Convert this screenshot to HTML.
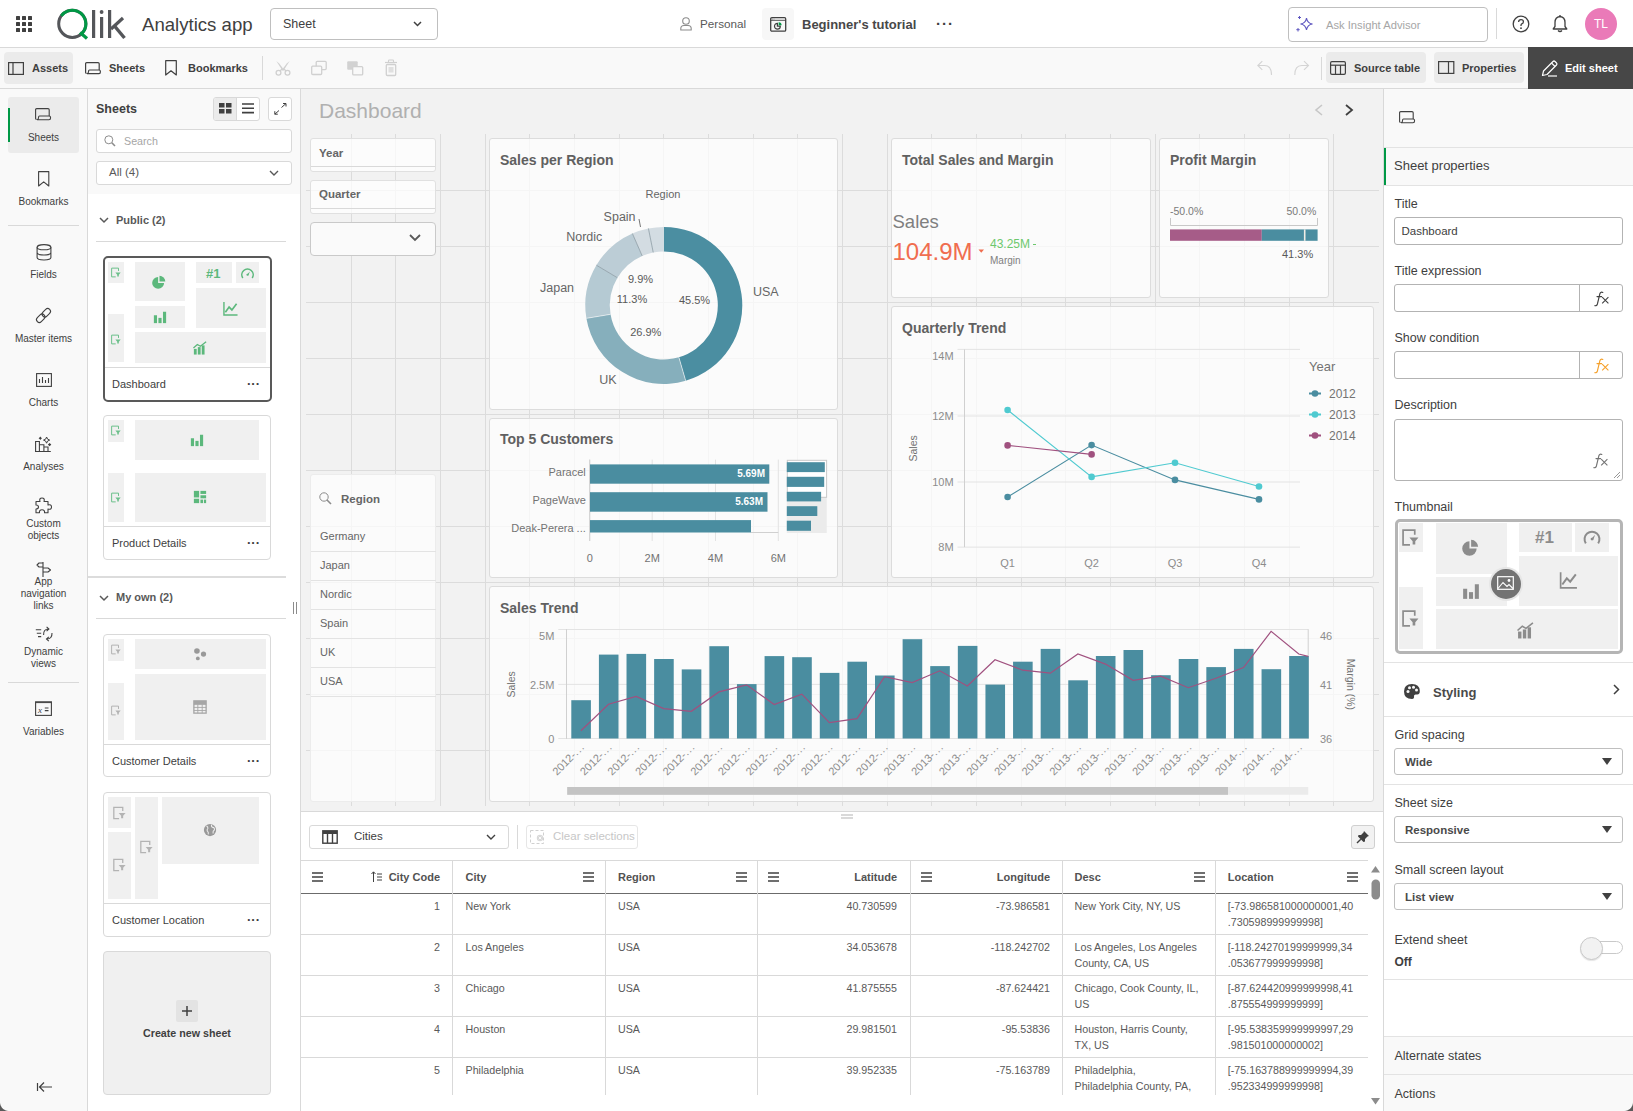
<!DOCTYPE html>
<html><head><meta charset="utf-8">
<style>
*{box-sizing:border-box;margin:0;padding:0}
html,body{width:1633px;height:1111px;overflow:hidden;background:#fff;font-family:"Liberation Sans",sans-serif;color:#404040}
.a{position:absolute}
.t{position:absolute;white-space:nowrap;line-height:1}
svg{position:absolute;overflow:visible}
.ri{position:absolute;left:0;width:87px;text-align:center;font-size:10px;color:#404040;line-height:12px}
.tile{position:absolute;background:#f0f0f0}
.card{position:absolute;background:#fff;border:1px solid #d9d9d9;border-radius:4px}
.cap{position:absolute;font-size:11px;color:#404040;white-space:nowrap;line-height:1}
.dots{position:absolute;font-size:13px;font-weight:700;color:#404040;letter-spacing:0px;line-height:1}
.lbl{position:absolute;font-size:13px;color:#404040;white-space:nowrap;line-height:1}
.inp{position:absolute;background:#fff;border:1px solid #b3b3b3;border-radius:3px}
.ctitle{position:absolute;font-size:14px;font-weight:700;color:#606060;white-space:nowrap;line-height:1}
.chart{position:absolute;background:rgba(255,255,255,0.7);border:1px solid #dcdcdc;border-radius:3px}
.ax{font-family:"Liberation Sans",sans-serif;font-size:11px;fill:#8c8c8c}
.th{position:absolute;font-size:11px;font-weight:700;color:#525252;white-space:nowrap;line-height:1}
.td{position:absolute;font-size:10.7px;color:#595959;white-space:nowrap;line-height:16px}
</style></head><body>
<!-- ============ HEADER ============ -->
<div class="a" style="left:0;top:0;width:1633px;height:48px;background:#fff;border-bottom:1px solid #d9d9d9"></div>
<svg style="left:16px;top:16px" width="16" height="16"><g fill="#404040"><rect x="0" y="0" width="4" height="4" rx=".5"/><rect x="6" y="0" width="4" height="4" rx=".5"/><rect x="12" y="0" width="4" height="4" rx=".5"/><rect x="0" y="6" width="4" height="4" rx=".5"/><rect x="6" y="6" width="4" height="4" rx=".5"/><rect x="12" y="6" width="4" height="4" rx=".5"/><rect x="0" y="12" width="4" height="4" rx=".5"/><rect x="6" y="12" width="4" height="4" rx=".5"/><rect x="12" y="12" width="4" height="4" rx=".5"/></g></svg>
<!-- Qlik logo -->
<svg style="left:56px;top:8px" width="70" height="32">
 <circle cx="16.3" cy="15.8" r="13.6" fill="none" stroke="#54565a" stroke-width="3"/>
 <path d="M5.3,7.8 A13.6,13.6 0 0 1 29.9,15.8 A13.6,13.6 0 0 1 25.5,25.8" fill="none" stroke="#009845" stroke-width="3"/>
 <path d="M24,24.5 L31,30.5" stroke="#009845" stroke-width="3.2" fill="none"/>
 <rect x="36" y="2" width="3.2" height="28" fill="#54565a"/>
 <rect x="44" y="9" width="3.2" height="21" fill="#54565a"/>
 <circle cx="45.6" cy="4" r="1.9" fill="#54565a"/>
 <rect x="52" y="2" width="3.2" height="28" fill="#54565a"/>
 <path d="M55,21 L67,10" stroke="#54565a" stroke-width="3.2" fill="none"/>
 <path d="M58.5,18 L68.5,30" stroke="#54565a" stroke-width="3.4" fill="none"/>
</svg>
<div class="t" style="left:142px;top:15.7px;font-size:18.6px;color:#404040">Analytics app</div>
<div class="a" style="left:270px;top:8px;width:168px;height:32px;border:1px solid #bfbfbf;border-radius:4px;background:#fff"></div>
<div class="t" style="left:283px;top:18px;font-size:12.5px;color:#404040">Sheet</div>
<svg style="left:413px;top:21px" width="9" height="6"><path d="M1,1 L4.5,4.5 L8,1" fill="none" stroke="#404040" stroke-width="1.5"/></svg>
<!-- person -->
<svg style="left:680px;top:17px" width="12" height="14"><circle cx="6" cy="4" r="3.3" fill="none" stroke="#8c8c8c" stroke-width="1.1"/><path d="M0.8,13 L0.8,11.5 Q0.8,8.5 4,8.5 L8,8.5 Q11.2,8.5 11.2,11.5 L11.2,13 Z" fill="none" stroke="#8c8c8c" stroke-width="1.1"/></svg>
<div class="t" style="left:700px;top:18px;font-size:11.7px;color:#595959">Personal</div>
<div class="a" style="left:762px;top:8px;width:32px;height:32px;background:#f7f7f7;border-radius:4px"></div>
<svg style="left:770px;top:17px" width="17" height="15"><rect x="0.7" y="0.7" width="15" height="13.5" rx="1.2" fill="none" stroke="#404040" stroke-width="1.3"/><line x1="0.7" y1="3.3" x2="15.7" y2="3.3" stroke="#404040" stroke-width="0.9"/><circle cx="2.6" cy="2" r=".4" fill="#404040"/><circle cx="4" cy="2" r=".4" fill="#404040"/><path d="M10.3,9.2 A2.9,2.9 0 1 1 7.4,6.3 L7.4,9.2 Z" fill="none" stroke="#404040" stroke-width="1.2"/><path d="M8.6,5.2 A3,3 0 0 1 11.6,8.2 L8.6,8.2 Z" fill="#009845"/></svg>
<div class="t" style="left:802px;top:17.5px;font-size:13px;font-weight:700;color:#484848">Beginner's tutorial</div>
<div class="t" style="left:936px;top:16px;font-size:15px;font-weight:700;color:#404040;letter-spacing:1px">···</div>
<!-- insight advisor -->
<div class="a" style="left:1288px;top:7px;width:200px;height:35px;border:1px solid #bfbfbf;border-radius:4px;background:#fff"></div>
<svg style="left:1296px;top:15px" width="18" height="17"><path d="M10.5,3 Q11.3,8.2 16.5,9 Q11.3,9.8 10.5,15 Q9.7,9.8 4.5,9 Q9.7,8.2 10.5,3 Z" fill="none" stroke="#5e56c0" stroke-width="1.1"/><path d="M3.5,1 L3.5,4 M2,2.5 L5,2.5" stroke="#5e56c0" stroke-width="1"/><path d="M2,13 L2,16.5 M0.3,14.7 L3.7,14.7" stroke="#5e56c0" stroke-width="1"/></svg>
<div class="t" style="left:1326px;top:19.5px;font-size:11.2px;color:#a6a6a6">Ask Insight Advisor</div>
<div class="a" style="left:1496px;top:8px;width:1px;height:31px;background:#d9d9d9"></div>
<svg style="left:1512px;top:15px" width="18" height="18"><circle cx="9" cy="9" r="7.8" fill="none" stroke="#404040" stroke-width="1.3"/><path d="M6.6,7 Q6.6,4.7 9,4.7 Q11.4,4.7 11.4,6.8 Q11.4,8.3 9.8,8.9 Q9,9.3 9,10.5 L9,11" fill="none" stroke="#404040" stroke-width="1.3"/><circle cx="9" cy="13.2" r=".9" fill="#404040"/></svg>
<svg style="left:1552px;top:15px" width="16" height="18"><path d="M8,1.5 Q3,2 3,7.5 L3,11.5 L1.2,14 L14.8,14 L13,11.5 L13,7.5 Q13,2 8,1.5 Z" fill="none" stroke="#404040" stroke-width="1.3" stroke-linejoin="round"/><path d="M6,15.5 Q8,17.5 10,15.5" fill="none" stroke="#404040" stroke-width="1.3"/><line x1="8" y1="0" x2="8" y2="1.6" stroke="#404040" stroke-width="1.3"/></svg>
<div class="a" style="left:1585px;top:8px;width:32px;height:32px;border-radius:50%;background:#ea7ab8"></div>
<div class="t" style="left:1585px;top:18px;width:32px;text-align:center;font-size:12px;color:#fff">TL</div>

<!-- ============ TOOLBAR ============ -->
<div class="a" style="left:0;top:48px;width:1633px;height:41px;background:#f9f9f9;border-bottom:1px solid #d9d9d9"></div>
<div class="a" style="left:4px;top:52px;width:69px;height:32px;background:#ebebeb;border-radius:4px"></div>
<svg style="left:8px;top:62px" width="16" height="13"><rect x=".6" y=".6" width="14.8" height="11.8" fill="none" stroke="#404040" stroke-width="1.2"/><line x1="5" y1=".6" x2="5" y2="12.4" stroke="#404040" stroke-width="1.2"/></svg>
<div class="t" style="left:32px;top:63px;font-size:11px;font-weight:700;color:#404040">Assets</div>
<svg style="left:85px;top:62px" width="16" height="13"><path d="M1.7,11.5 Q.6,11.5 .6,10.3 L.6,1.8 Q.6,.6 1.7,.6 L13,.6 Q14.2,.6 14.2,1.8 L14.2,8" fill="none" stroke="#404040" stroke-width="1.2"/><path d="M4.5,8 L14,8 Q15.4,8 15.4,9.7 Q15.4,11.6 14,11.6 L2,11.6 Q3.5,11.6 3.5,9.8 Q3.5,8 4.5,8 Z" fill="none" stroke="#404040" stroke-width="1.2"/></svg>
<div class="t" style="left:109px;top:63px;font-size:11px;font-weight:700;color:#404040">Sheets</div>
<svg style="left:165px;top:60px" width="12" height="16"><path d="M.7,.7 L11.3,.7 L11.3,15 L6,10.8 L.7,15 Z" fill="none" stroke="#404040" stroke-width="1.2" stroke-linejoin="round"/></svg>
<div class="t" style="left:188px;top:63px;font-size:11px;font-weight:700;color:#404040">Bookmarks</div>
<div class="a" style="left:262px;top:56px;width:1px;height:24px;background:#d9d9d9"></div>
<svg style="left:274px;top:59px" width="18" height="18"><path d="M2.3,2 L5.2,4.5 L10,10.8 L8.6,11.8 Z" fill="#d0d0d0"/><path d="M15.7,2 L12.8,4.5 L8,10.8 L9.4,11.8 Z" fill="#d0d0d0"/><circle cx="4.5" cy="13.8" r="2.4" fill="none" stroke="#d0d0d0" stroke-width="1.3"/><circle cx="13.5" cy="13.8" r="2.4" fill="none" stroke="#d0d0d0" stroke-width="1.3"/><path d="M6,12 L8,10 M12,12 L10,10" stroke="#d0d0d0" stroke-width="1.3"/></svg>
<svg style="left:310px;top:60px" width="18" height="16"><rect x="6.2" y="1.3" width="10" height="8.3" rx="1" fill="#f9f9f9" stroke="#d0d0d0" stroke-width="1.3"/><rect x="1.7" y="6.2" width="10" height="8.3" rx="1" fill="#f9f9f9" stroke="#d0d0d0" stroke-width="1.3"/></svg>
<svg style="left:346px;top:60px" width="18" height="16"><rect x="1.2" y="1.2" width="10.5" height="8.6" rx="1" fill="#d2d2d2"/><rect x="6.7" y="6.6" width="10" height="8.3" rx="1" fill="#f9f9f9" stroke="#d0d0d0" stroke-width="1.3"/></svg>
<svg style="left:384px;top:59px" width="14" height="18"><path d="M1,3.5 L13,3.5" stroke="#d0d0d0" stroke-width="1.2"/><path d="M4.5,3.5 L4.5,1.8 Q4.5,1 5.3,1 L8.7,1 Q9.5,1 9.5,1.8 L9.5,3.5" fill="none" stroke="#d0d0d0" stroke-width="1.1"/><rect x="2.3" y="5.5" width="9.4" height="11" rx="1" fill="none" stroke="#d0d0d0" stroke-width="1.3"/><rect x="4.5" y="8" width="5" height="5.5" fill="#e0e0e0"/></svg>
<!-- right toolbar -->
<svg style="left:1256px;top:60px" width="18" height="16"><path d="M6.3,1.2 L1.8,5.5 L6.3,9.8 M1.8,5.5 L8.5,5.5 Q15.5,5.5 15.5,15" fill="none" stroke="#d4d4d4" stroke-width="1.1"/></svg>
<svg style="left:1292px;top:60px" width="18" height="16"><path d="M12,1.2 L16.5,5.5 L12,9.8 M16.5,5.5 L9.8,5.5 Q2.8,5.5 2.8,15" fill="none" stroke="#d4d4d4" stroke-width="1.1"/></svg>
<div class="a" style="left:1321px;top:57px;width:1px;height:23px;background:#d9d9d9"></div>
<div class="a" style="left:1326px;top:52px;width:100px;height:31px;background:#ebebeb;border-radius:4px"></div>
<svg style="left:1330px;top:61px" width="16" height="14"><rect x=".6" y=".6" width="14.8" height="12.8" rx="1.3" fill="none" stroke="#404040" stroke-width="1.2"/><line x1=".6" y1="4.2" x2="15.4" y2="4.2" stroke="#404040" stroke-width="1.2"/><line x1="5.5" y1="4.2" x2="5.5" y2="13.4" stroke="#404040" stroke-width="1.2"/><line x1="10.5" y1="4.2" x2="10.5" y2="13.4" stroke="#404040" stroke-width="1.2"/></svg>
<div class="t" style="left:1354px;top:63px;font-size:11px;font-weight:700;color:#404040">Source table</div>
<div class="a" style="left:1434px;top:52px;width:90px;height:31px;background:#ebebeb;border-radius:4px"></div>
<svg style="left:1438px;top:61px" width="17" height="13"><rect x=".6" y=".6" width="15.2" height="11.8" fill="none" stroke="#404040" stroke-width="1.2"/><line x1="10.5" y1=".6" x2="10.5" y2="12.4" stroke="#404040" stroke-width="1.2"/></svg>
<div class="t" style="left:1462px;top:63px;font-size:11px;font-weight:700;color:#404040">Properties</div>
<div class="a" style="left:1528px;top:47px;width:105px;height:42px;background:#474747"></div>
<svg style="left:1541px;top:59px" width="17" height="18"><path d="M1.5,16.5 L2.5,12 L12,2.5 Q13,1.5 14,2.5 L15.5,4 Q16.5,5 15.5,6 L6,15.5 Z" fill="none" stroke="#fff" stroke-width="1.2" stroke-linejoin="round"/><line x1="10.5" y1="4" x2="14" y2="7.5" stroke="#fff" stroke-width="1.1"/><line x1="7" y1="17" x2="16" y2="17" stroke="#fff" stroke-width="1.2"/></svg>
<div class="t" style="left:1565px;top:63px;font-size:11px;font-weight:700;color:#fff">Edit sheet</div>
<svg width="0" height="0" style="position:absolute;left:0;top:0">
<defs>
<symbol id="i-filter" viewBox="0 0 16 16"><path d="M12,5.5 L12,1 L1,1 L1,15 L7.5,15" fill="none" stroke="currentColor" stroke-width="1.6"/><path d="M7,8 L15.5,8 L12.5,11.5 L12.5,14.5 L10,14.5 L10,11.5 Z" fill="currentColor"/></symbol>
<symbol id="i-pie" viewBox="0 0 16 16"><path d="M7,2.2 A6.8,6.8 0 1 0 13.8,9 L7,9 Z" fill="currentColor"/><path d="M8.6,0.8 A6.8,6.8 0 0 1 15.2,7.4 L8.6,7.4 Z" fill="currentColor"/></symbol>
<symbol id="i-bar" viewBox="0 0 16 16"><rect x="1" y="6" width="3.6" height="9" fill="currentColor"/><rect x="6.2" y="9" width="3.6" height="6" fill="currentColor"/><rect x="11.4" y="2" width="3.6" height="13" fill="currentColor"/></symbol>
<symbol id="i-line" viewBox="0 0 16 16"><path d="M1,1 L1,15 L15.5,15" fill="none" stroke="currentColor" stroke-width="1.5"/><path d="M2.5,12 L6.5,6.5 L9.5,9.5 L14.5,3" fill="none" stroke="currentColor" stroke-width="1.8"/></symbol>
<symbol id="i-combo" viewBox="0 0 16 16"><rect x="1" y="9" width="3.2" height="6.5" fill="currentColor"/><rect x="5.5" y="7" width="3.2" height="8.5" fill="currentColor"/><rect x="10" y="5" width="3.2" height="10.5" fill="currentColor"/><path d="M0.5,8 L5,4 L8.5,6 L15,0.8" fill="none" stroke="currentColor" stroke-width="1.5"/></symbol>
<symbol id="i-gauge" viewBox="0 0 16 16"><path d="M2.2,13.5 A7,7 0 1 1 13.8,13.5" fill="none" stroke="currentColor" stroke-width="1.9"/><path d="M7,9.5 L11,5.5 L9,10.5 Z" fill="currentColor"/><circle cx="8" cy="9.5" r="1.3" fill="currentColor"/></symbol>
<symbol id="i-tree" viewBox="0 0 16 16"><rect x="1" y="1" width="6" height="7.5" fill="currentColor"/><rect x="1" y="10" width="6" height="5" fill="currentColor"/><rect x="8.5" y="1" width="6.5" height="3.5" fill="currentColor"/><rect x="8.5" y="6" width="6.5" height="3.5" fill="currentColor"/><rect x="8.5" y="11" width="3" height="4" fill="currentColor"/><rect x="12.5" y="11" width="2.5" height="4" fill="currentColor"/></symbol>
<symbol id="i-scatter" viewBox="0 0 16 16"><circle cx="4.5" cy="4.5" r="3.2" fill="currentColor"/><circle cx="12" cy="8" r="3" fill="currentColor"/><circle cx="5.5" cy="13" r="2.2" fill="currentColor"/></symbol>
<symbol id="i-table" viewBox="0 0 16 16"><rect x="1" y="1" width="14" height="14" fill="none" stroke="currentColor" stroke-width="1.5"/><path d="M1,5 L15,5 M1,8.5 L15,8.5 M1,12 L15,12 M5.5,5 L5.5,15 M10.5,5 L10.5,15" stroke="currentColor" stroke-width="1"/><rect x="1" y="1" width="14" height="4" fill="currentColor"/></symbol>
<symbol id="i-globe" viewBox="0 0 16 16"><circle cx="8" cy="8" r="7" fill="currentColor"/><path d="M4,3.5 Q6,4.5 5.5,6.5 Q4,7.5 5,9.5 Q6.5,10 6,13 M10,2 Q9,4 11,5 Q13.5,5 13,8 Q11,9 11.5,12" fill="none" stroke="#f0f0f0" stroke-width="1.2"/></symbol>
</defs></svg>
<!-- ============ LEFT RAIL ============ -->
<div class="a" style="left:0;top:89px;width:88px;height:1022px;background:#f9f9f9;border-right:1px solid #d9d9d9"></div>
<div class="a" style="left:8px;top:97px;width:71px;height:56px;background:#ebebeb;border-radius:3px"></div>
<div class="a" style="left:8px;top:108px;width:2px;height:34px;background:#009845"></div>
<svg style="left:35px;top:108px" width="17" height="13"><path d="M1.7,11.5 Q.6,11.5 .6,10.3 L.6,1.8 Q.6,.6 1.7,.6 L13,.6 Q14.2,.6 14.2,1.8 L14.2,8" fill="none" stroke="#404040" stroke-width="1.1"/><path d="M4.5,8 L14,8 Q15.6,8 15.6,9.8 Q15.6,11.8 14,11.8 L2,11.8 Q3.5,11.8 3.5,9.8 Q3.5,8 4.5,8 Z" fill="none" stroke="#404040" stroke-width="1.1"/></svg>
<div class="ri" style="top:132px">Sheets</div>
<svg style="left:38px;top:171px" width="12" height="16"><path d="M.6,.6 L10.8,.6 L10.8,15 L5.7,10.8 L.6,15 Z" fill="none" stroke="#404040" stroke-width="1.1" stroke-linejoin="round"/></svg>
<div class="ri" style="top:196px">Bookmarks</div>
<div class="a" style="left:8px;top:225px;width:71px;height:1px;background:#d9d9d9"></div>
<svg style="left:36px;top:244px" width="16" height="17"><ellipse cx="8" cy="3.2" rx="6.9" ry="2.6" fill="none" stroke="#404040" stroke-width="1.1"/><path d="M1.1,3.2 L1.1,13.5 Q1.1,16 8,16 Q14.9,16 14.9,13.5 L14.9,3.2 M1.1,8.5 Q1.1,11 8,11 Q14.9,11 14.9,8.5" fill="none" stroke="#404040" stroke-width="1.1"/></svg>
<div class="ri" style="top:269px">Fields</div>
<svg style="left:36px;top:308px" width="15" height="15"><g transform="rotate(-45 7.5 7.5)" fill="none" stroke="#404040" stroke-width="1.1"><rect x="-1.2" y="4.7" width="9.5" height="5.6" rx="2.8"/><rect x="6.7" y="4.7" width="9.5" height="5.6" rx="2.8"/></g></svg>
<div class="ri" style="top:333px">Master items</div>
<svg style="left:36px;top:373px" width="16" height="14"><rect x=".6" y=".6" width="14.8" height="12.8" fill="none" stroke="#404040" stroke-width="1.1"/><path d="M3.5,10 L3.5,6 M6.5,10 L6.5,4 M9.5,10 L9.5,7 M12.5,10 L12.5,5" stroke="#404040" stroke-width="1.1"/></svg>
<div class="ri" style="top:397px">Charts</div>
<svg style="left:35px;top:436px" width="17" height="17"><path d="M0.6,15.5 L0.6,5.5 L4.4,5.5 L4.4,15.5 M4.4,15.5 L4.4,8.8 L8.9,8.8 L8.9,15.5 M8.9,15.5 L8.9,11 L13,11 L13,15.5 M0,15.5 L15.8,15.5" fill="none" stroke="#404040" stroke-width="1.1"/><path d="M11.6,1 Q12,3.7 14.7,4.1 Q12,4.5 11.6,7.2 Q11.2,4.5 8.5,4.1 Q11.2,3.7 11.6,1 Z" fill="none" stroke="#404040" stroke-width="1"/><path d="M5.3,0.6 L6.1,1.5 L7,2.3 L6.1,3.1 L5.3,4 L4.5,3.1 L3.6,2.3 L4.5,1.5Z" fill="#404040"/><path d="M14.6,6.9 L15.4,7.8 L16.3,8.6 L15.4,9.4 L14.6,10.3 L13.8,9.4 L12.9,8.6 L13.8,7.8Z" fill="#404040"/></svg>
<div class="ri" style="top:461px">Analyses</div>
<svg style="left:35px;top:497px" width="18" height="17"><path d="M1,4.5 L5,4.5 Q4,1 7,1 Q10,1 9,4.5 L13,4.5 L13,8 Q16.5,7 16.5,10 Q16.5,13 13,12 L13,15.8 L9.5,15.8 Q10,12.8 7,12.8 Q4,12.8 4.5,15.8 L1,15.8 L1,12 Q3.5,12 3.5,10 Q3.5,8 1,8 Z" fill="none" stroke="#404040" stroke-width="1.1" stroke-linejoin="round"/></svg>
<div class="ri" style="top:518px">Custom<br>objects</div>
<svg style="left:36px;top:561px" width="16" height="17"><path d="M7,16 L7,1 M7,2 L3,2 L1,4 L3,6 L7,6 M7,7 L12,7 L14.5,9 L12,11 L7,11" fill="none" stroke="#404040" stroke-width="1.1" stroke-linejoin="round"/></svg>
<div class="ri" style="top:576px">App<br>navigation<br>links</div>
<svg style="left:35px;top:626px" width="18" height="16"><path d="M0.8,3.8 L6.2,3.8 M1.8,7.2 L6.2,7.2 M3,10.6 L6.2,10.6" stroke="#404040" stroke-width="1.1"/><path d="M8.6,9 Q8.3,3 13.6,3 M11.6,0.9 L13.9,3 L11.6,5.1 M17,7 Q17.2,13 11.8,13 M13.8,10.9 L11.5,13 L13.8,15.1" fill="none" stroke="#404040" stroke-width="1.1"/></svg>
<div class="ri" style="top:646px">Dynamic<br>views</div>
<div class="a" style="left:8px;top:682px;width:71px;height:1px;background:#d9d9d9"></div>
<svg style="left:35px;top:701px" width="17" height="15"><rect x=".6" y=".8" width="15.8" height="13.6" fill="none" stroke="#404040" stroke-width="1.1"/><line x1=".6" y1="1.6" x2="16.4" y2="1.6" stroke="#404040" stroke-width="1"/><text x="3" y="11.5" font-family="Liberation Serif" font-style="italic" font-size="9" fill="#404040">x</text><path d="M9.8,7 L13.5,7 M9.8,9.6 L13.5,9.6" stroke="#404040" stroke-width="1.1"/></svg>
<div class="ri" style="top:726px">Variables</div>
<svg style="left:36px;top:1081px" width="17" height="12"><path d="M1.5,2 L1.5,10 M16,6 L4,6 M8,1.5 L3.5,6 L8,10.5" fill="none" stroke="#404040" stroke-width="1.2"/></svg>

<!-- ============ SHEETS PANEL ============ -->
<div class="a" style="left:88px;top:89px;width:213px;height:1022px;background:#fff;border-right:1px solid #d9d9d9"></div>
<div class="a" style="left:88px;top:89px;width:212px;height:105px;background:#f9f9f9"></div>
<div class="t" style="left:96px;top:103px;font-size:12.5px;font-weight:700;color:#404040">Sheets</div>
<div class="a" style="left:213px;top:97px;width:47px;height:24px;border:1px solid #d9d9d9;border-radius:3px;background:#fff"></div>
<div class="a" style="left:214px;top:98px;width:23px;height:22px;background:#ebebeb;border-right:1px solid #d9d9d9;border-radius:2px 0 0 2px"></div>
<svg style="left:219px;top:103px" width="13" height="11"><rect x="0" y="0" width="5.5" height="4.5" fill="#404040"/><rect x="7" y="0" width="5.5" height="4.5" fill="#404040"/><rect x="0" y="6" width="5.5" height="4.5" fill="#404040"/><rect x="7" y="6" width="5.5" height="4.5" fill="#404040"/></svg>
<svg style="left:242px;top:103px" width="13" height="11"><path d="M0,1 L12,1 M0,5.3 L12,5.3 M0,9.6 L12,9.6" stroke="#404040" stroke-width="1.6"/></svg>
<div class="a" style="left:268px;top:97px;width:24px;height:24px;border:1px solid #d9d9d9;border-radius:3px;background:#fff"></div>
<svg style="left:274px;top:103px" width="13" height="12"><path d="M7.5,4.5 L12,0.5 M9,0.5 L12,0.5 L12,3.5 M5,7.5 L0.8,11.2 M0.8,8.2 L0.8,11.2 L3.8,11.2" fill="none" stroke="#404040" stroke-width="1"/></svg>
<div class="a" style="left:96px;top:129px;width:196px;height:24px;border:1px solid #d9d9d9;border-radius:3px;background:#fff"></div>
<svg style="left:104px;top:135px" width="12" height="12"><circle cx="4.8" cy="4.8" r="4" fill="none" stroke="#8c8c8c" stroke-width="1"/><path d="M7.8,7.8 L11,11" stroke="#8c8c8c" stroke-width="1.6"/></svg>
<div class="t" style="left:124px;top:136px;font-size:10.7px;color:#a6a6a6">Search</div>
<div class="a" style="left:96px;top:161px;width:196px;height:24px;border:1px solid #d9d9d9;border-radius:3px;background:#fff"></div>
<div class="t" style="left:109px;top:167px;font-size:11.5px;color:#595959">All (4)</div>
<svg style="left:269px;top:170px" width="10" height="6"><path d="M1,1 L5,5 L9,1" fill="none" stroke="#595959" stroke-width="1.4"/></svg>
<svg style="left:99px;top:217px" width="10" height="6"><path d="M1,1 L5,5 L9,1" fill="none" stroke="#595959" stroke-width="1.5"/></svg>
<div class="t" style="left:116px;top:215px;font-size:11px;font-weight:700;color:#595959">Public (2)</div>
<div class="a" style="left:96px;top:241px;width:190px;height:1px;background:#d9d9d9"></div>

<!-- card Dashboard -->
<div class="a" style="left:103px;top:256px;width:169px;height:146px;border:2px solid #595959;border-radius:5px;background:#fff"></div>
<div class="tile" style="left:108px;top:262px;width:16px;height:21px"></div>
<div class="tile" style="left:135px;top:262px;width:50px;height:39px"></div>
<div class="tile" style="left:196px;top:262px;width:36px;height:21px"></div>
<div class="tile" style="left:236px;top:262px;width:23px;height:21px"></div>
<div class="tile" style="left:196px;top:288px;width:70px;height:40px"></div>
<div class="tile" style="left:135px;top:306px;width:50px;height:22px"></div>
<div class="tile" style="left:108px;top:314px;width:16px;height:48px"></div>
<div class="tile" style="left:135px;top:332px;width:131px;height:31px"></div>
<div class="a" style="left:105px;top:367px;width:165px;height:1px;background:#d9d9d9"></div>
<div class="cap" style="left:112px;top:379px">Dashboard</div>
<div class="dots" style="left:247px;top:377px">···</div>
<svg style="left:111px;top:267px;color:#6cc08b" width="10" height="11"><use href="#i-filter"/></svg>
<svg style="left:152px;top:275px;color:#5cb87c" width="14" height="14"><use href="#i-pie"/></svg>
<div class="t" style="left:206px;top:267px;font-size:13px;font-weight:700;color:#5cb87c">#1</div>
<svg style="left:241px;top:267px;color:#5cb87c" width="13" height="13"><use href="#i-gauge"/></svg>
<svg style="left:223px;top:301px;color:#5cb87c" width="15" height="15"><use href="#i-line"/></svg>
<svg style="left:153px;top:310px;color:#5cb87c" width="14" height="14"><use href="#i-bar"/></svg>
<svg style="left:111px;top:334px;color:#6cc08b" width="10" height="11"><use href="#i-filter"/></svg>
<svg style="left:193px;top:341px;color:#5cb87c" width="14" height="14"><use href="#i-combo"/></svg>

<!-- card Product Details -->
<div class="card" style="left:103px;top:415px;width:168px;height:145px"></div>
<div class="tile" style="left:108px;top:420px;width:16px;height:22px"></div>
<div class="tile" style="left:135px;top:420px;width:124px;height:40px"></div>
<div class="tile" style="left:108px;top:473px;width:16px;height:49px"></div>
<div class="tile" style="left:135px;top:473px;width:131px;height:49px"></div>
<div class="a" style="left:104px;top:526px;width:166px;height:1px;background:#d9d9d9"></div>
<svg style="left:111px;top:425px;color:#6cc08b" width="10" height="11"><use href="#i-filter"/></svg>
<svg style="left:190px;top:433px;color:#5cb87c" width="14" height="14"><use href="#i-bar"/></svg>
<svg style="left:111px;top:492px;color:#6cc08b" width="10" height="11"><use href="#i-filter"/></svg>
<svg style="left:193px;top:490px;color:#5cb87c" width="14" height="14"><use href="#i-tree"/></svg>
<div class="cap" style="left:112px;top:538px">Product Details</div>
<div class="dots" style="left:247px;top:536px">···</div>

<div class="a" style="left:88px;top:576px;width:198px;height:2px;background:#dcdcdc"></div>
<svg style="left:99px;top:595px" width="10" height="6"><path d="M1,1 L5,5 L9,1" fill="none" stroke="#595959" stroke-width="1.5"/></svg>
<div class="t" style="left:116px;top:592px;font-size:11px;font-weight:700;color:#595959">My own (2)</div>
<div class="a" style="left:96px;top:618px;width:190px;height:1px;background:#d9d9d9"></div>
<div class="a" style="left:293px;top:602px;width:1px;height:12px;background:#8c8c8c"></div>
<div class="a" style="left:296px;top:602px;width:1px;height:12px;background:#8c8c8c"></div>

<!-- card Customer Details -->
<div class="card" style="left:103px;top:634px;width:168px;height:143px"></div>
<div class="tile" style="left:108px;top:639px;width:16px;height:22px"></div>
<div class="tile" style="left:135px;top:639px;width:131px;height:30px"></div>
<div class="tile" style="left:108px;top:683px;width:16px;height:57px"></div>
<div class="tile" style="left:135px;top:674px;width:131px;height:66px"></div>
<div class="a" style="left:104px;top:744px;width:166px;height:1px;background:#d9d9d9"></div>
<svg style="left:111px;top:644px;color:#b3b3b3" width="10" height="11"><use href="#i-filter"/></svg>
<svg style="left:193px;top:647px;color:#999" width="14" height="14"><use href="#i-scatter"/></svg>
<svg style="left:111px;top:705px;color:#b3b3b3" width="10" height="11"><use href="#i-filter"/></svg>
<svg style="left:193px;top:700px;color:#a6a6a6" width="14" height="14"><use href="#i-table"/></svg>
<div class="cap" style="left:112px;top:756px">Customer Details</div>
<div class="dots" style="left:247px;top:754px">···</div>

<!-- card Customer Location -->
<div class="card" style="left:103px;top:792px;width:168px;height:145px"></div>
<div class="tile" style="left:108px;top:797px;width:23px;height:31px"></div>
<div class="tile" style="left:108px;top:832px;width:23px;height:67px"></div>
<div class="tile" style="left:135px;top:797px;width:23px;height:102px"></div>
<div class="tile" style="left:162px;top:797px;width:97px;height:67px"></div>
<div class="a" style="left:104px;top:903px;width:166px;height:1px;background:#d9d9d9"></div>
<svg style="left:113px;top:806px;color:#b3b3b3" width="13" height="14"><use href="#i-filter"/></svg>
<svg style="left:113px;top:858px;color:#b3b3b3" width="13" height="14"><use href="#i-filter"/></svg>
<svg style="left:140px;top:840px;color:#b3b3b3" width="13" height="14"><use href="#i-filter"/></svg>
<svg style="left:203px;top:823px;color:#999" width="14" height="14"><use href="#i-globe"/></svg>
<div class="cap" style="left:112px;top:915px">Customer Location</div>
<div class="dots" style="left:247px;top:913px">···</div>

<!-- create new sheet -->
<div class="a" style="left:103px;top:951px;width:168px;height:144px;background:#f0f0f0;border:1px solid #d9d9d9;border-radius:4px"></div>
<div class="a" style="left:176px;top:1000px;width:22px;height:22px;background:#e3e3e3;border-radius:2px"></div>
<svg style="left:181px;top:1005px" width="12" height="12"><path d="M6,1 L6,11 M1,6 L11,6" stroke="#404040" stroke-width="1.5"/></svg>
<div class="t" style="left:143px;top:1028px;font-size:10.7px;font-weight:700;color:#404040">Create new sheet</div>
<!-- ============ CANVAS ============ -->
<div class="a" style="left:301px;top:89px;width:1082px;height:723px;background:#f2f2f2;border-bottom:1px solid #d9d9d9"></div>
<svg style="left:0;top:0" width="1633" height="1111"><g stroke="#dcdcdc" stroke-width="1"><line x1="351.5" y1="134" x2="351.5" y2="806"/><line x1="395.5" y1="134" x2="395.5" y2="806"/><line x1="440.5" y1="134" x2="440.5" y2="806"/><line x1="485.5" y1="134" x2="485.5" y2="806"/><line x1="529.5" y1="134" x2="529.5" y2="806"/><line x1="574.5" y1="134" x2="574.5" y2="806"/><line x1="619.5" y1="134" x2="619.5" y2="806"/><line x1="663.5" y1="134" x2="663.5" y2="806"/><line x1="708.5" y1="134" x2="708.5" y2="806"/><line x1="753.5" y1="134" x2="753.5" y2="806"/><line x1="797.5" y1="134" x2="797.5" y2="806"/><line x1="842.5" y1="134" x2="842.5" y2="806"/><line x1="887.5" y1="134" x2="887.5" y2="806"/><line x1="931.5" y1="134" x2="931.5" y2="806"/><line x1="976.5" y1="134" x2="976.5" y2="806"/><line x1="1021.5" y1="134" x2="1021.5" y2="806"/><line x1="1065.5" y1="134" x2="1065.5" y2="806"/><line x1="1110.5" y1="134" x2="1110.5" y2="806"/><line x1="1155.5" y1="134" x2="1155.5" y2="806"/><line x1="1199.5" y1="134" x2="1199.5" y2="806"/><line x1="1244.5" y1="134" x2="1244.5" y2="806"/><line x1="1289.5" y1="134" x2="1289.5" y2="806"/><line x1="1333.5" y1="134" x2="1333.5" y2="806"/><line x1="306" y1="190.5" x2="1379" y2="190.5"/><line x1="306" y1="246.5" x2="1379" y2="246.5"/><line x1="306" y1="302.5" x2="1379" y2="302.5"/><line x1="306" y1="358.5" x2="1379" y2="358.5"/><line x1="306" y1="414.5" x2="1379" y2="414.5"/><line x1="306" y1="470.5" x2="1379" y2="470.5"/><line x1="306" y1="526.5" x2="1379" y2="526.5"/><line x1="306" y1="582.5" x2="1379" y2="582.5"/><line x1="306" y1="638.5" x2="1379" y2="638.5"/><line x1="306" y1="694.5" x2="1379" y2="694.5"/><line x1="306" y1="750.5" x2="1379" y2="750.5"/></g></svg>
<div class="t" style="left:319px;top:100px;font-size:21px;color:#b0b0b0">Dashboard</div>
<svg style="left:1314px;top:104px" width="9" height="12"><path d="M8,1 L2,6 L8,11" fill="none" stroke="#c7c7c7" stroke-width="1.6"/></svg>
<svg style="left:1345px;top:104px" width="9" height="12"><path d="M1,1 L7,6 L1,11" fill="none" stroke="#404040" stroke-width="1.8"/></svg>
<div class="chart" style="left:310px;top:138px;width:126px;height:34px;background:rgba(255,255,255,.75);border-color:#e0e0e0"></div>
<div class="a" style="left:311px;top:166px;width:124px;height:1px;background:#d9d9d9"></div>
<div class="t" style="left:319px;top:147.5px;font-size:11.5px;font-weight:700;color:#666">Year</div>
<div class="chart" style="left:310px;top:180px;width:126px;height:34px;background:rgba(255,255,255,.75);border-color:#e0e0e0"></div>
<div class="a" style="left:311px;top:208px;width:124px;height:1px;background:#d9d9d9"></div>
<div class="t" style="left:319px;top:189.3px;font-size:11.5px;font-weight:700;color:#666">Quarter</div>
<div class="a" style="left:310px;top:222px;width:126px;height:34px;background:#fafafa;border:1px solid #c9c9c9;border-radius:4px"></div>
<svg style="left:409px;top:234px" width="12" height="8"><path d="M1,1 L6,6 L11,1" fill="none" stroke="#595959" stroke-width="1.8"/></svg>
<div class="chart" style="left:310px;top:474px;width:126px;height:328px;border-color:#ececec"></div>
<svg style="left:319px;top:492px" width="13" height="13"><circle cx="5" cy="5" r="4.2" fill="none" stroke="#8c8c8c" stroke-width="1"/><path d="M8,8 L12,12" stroke="#8c8c8c" stroke-width="1.6"/></svg>
<div class="t" style="left:341px;top:493.5px;font-size:11.5px;font-weight:700;color:#666">Region</div>
<div class="t" style="left:320px;top:531.3px;font-size:11px;color:#666">Germany</div>
<div class="a" style="left:311px;top:551px;width:125px;height:1px;background:#e3e3e3"></div>
<div class="t" style="left:320px;top:560.3px;font-size:11px;color:#666">Japan</div>
<div class="a" style="left:311px;top:580px;width:125px;height:1px;background:#e3e3e3"></div>
<div class="t" style="left:320px;top:589.3px;font-size:11px;color:#666">Nordic</div>
<div class="a" style="left:311px;top:609px;width:125px;height:1px;background:#e3e3e3"></div>
<div class="t" style="left:320px;top:618.3px;font-size:11px;color:#666">Spain</div>
<div class="a" style="left:311px;top:638px;width:125px;height:1px;background:#e3e3e3"></div>
<div class="t" style="left:320px;top:647.3px;font-size:11px;color:#666">UK</div>
<div class="a" style="left:311px;top:667px;width:125px;height:1px;background:#e3e3e3"></div>
<div class="t" style="left:320px;top:676.3px;font-size:11px;color:#666">USA</div>
<div class="a" style="left:311px;top:696px;width:125px;height:1px;background:#e3e3e3"></div>
<div class="chart" style="left:489px;top:138px;width:349px;height:272px"></div>
<div class="ctitle" style="left:500px;top:152.5px">Sales per Region</div>
<svg style="left:0;top:0" width="1633" height="1111"><path d="M663.80,226.90 A78.5,78.5 0 0 1 685.70,380.78 L678.87,357.26 A54,54 0 0 0 663.80,251.40 Z" fill="#4b8ea1"/><path d="M685.70,380.78 A78.5,78.5 0 0 1 586.38,318.36 L610.54,314.31 A54,54 0 0 0 678.87,357.26 Z" fill="#86afbc"/><path d="M586.38,318.36 A78.5,78.5 0 0 1 596.37,265.20 L617.42,277.75 A54,54 0 0 0 610.54,314.31 Z" fill="#b5cad3"/><path d="M596.37,265.20 A78.5,78.5 0 0 1 632.37,233.47 L642.18,255.92 A54,54 0 0 0 617.42,277.75 Z" fill="#bccdd6"/><path d="M632.37,233.47 A78.5,78.5 0 0 1 648.42,228.42 L653.22,252.45 A54,54 0 0 0 642.18,255.92 Z" fill="#d3dce2"/><path d="M648.42,228.42 A78.5,78.5 0 0 1 663.80,226.90 L663.80,251.40 A54,54 0 0 0 653.22,252.45 Z" fill="#d3dce2"/><line x1="596.37" y1="265.20" x2="617.42" y2="277.75" stroke="#8a9aa3" stroke-width="0.8"/><line x1="632.37" y1="233.47" x2="642.18" y2="255.92" stroke="#8a9aa3" stroke-width="0.8"/><line x1="648.42" y1="228.42" x2="653.22" y2="252.45" stroke="#8a9aa3" stroke-width="0.8"/><line x1="685.70" y1="380.78" x2="678.87" y2="357.26" stroke="#fafafa" stroke-width="0.6"/><line x1="586.38" y1="318.36" x2="610.54" y2="314.31" stroke="#fafafa" stroke-width="0.6"/><line x1="639" y1="219" x2="640.5" y2="227" stroke="#666" stroke-width="0.9"/></svg>
<div class="t" style="left:563px;top:189.1px;width:200px;text-align:center;font-size:11px;font-weight:400;color:#666">Region</div>
<div class="t" style="left:603.6px;top:210.7px;font-size:12.5px;font-weight:400;color:#666">Spain</div>
<div class="t" style="left:566.2px;top:230.5px;font-size:12.5px;font-weight:400;color:#666">Nordic</div>
<div class="t" style="left:540px;top:282.0px;font-size:12.5px;font-weight:400;color:#666">Japan</div>
<div class="t" style="left:753px;top:285.5px;font-size:12.5px;font-weight:400;color:#666">USA</div>
<div class="t" style="left:599.3px;top:374.4px;font-size:12.5px;font-weight:400;color:#666">UK</div>
<div class="t" style="left:540.5px;top:273.8px;width:200px;text-align:center;font-size:11px;font-weight:400;color:#595959">9.9%</div>
<div class="t" style="left:532px;top:294.0px;width:200px;text-align:center;font-size:11px;font-weight:400;color:#595959">11.3%</div>
<div class="t" style="left:594.5px;top:294.6px;width:200px;text-align:center;font-size:11px;font-weight:400;color:#595959">45.5%</div>
<div class="t" style="left:545.8px;top:326.8px;width:200px;text-align:center;font-size:11px;font-weight:400;color:#595959">26.9%</div>
<div class="chart" style="left:489px;top:418px;width:349px;height:160px"></div>
<div class="ctitle" style="left:500px;top:432px">Top 5 Customers</div>
<svg style="left:0;top:0" width="1633" height="1111"><line x1="589.7" y1="459.6" x2="589.7" y2="541" stroke="#e3e3e3" stroke-width="1"/><line x1="652.2" y1="459.6" x2="652.2" y2="541" stroke="#e3e3e3" stroke-width="1"/><line x1="715.5" y1="459.6" x2="715.5" y2="541" stroke="#e3e3e3" stroke-width="1"/><line x1="778.3" y1="459.6" x2="778.3" y2="541" stroke="#e3e3e3" stroke-width="1"/><line x1="589.7" y1="459.6" x2="589.7" y2="541" stroke="#d0d0d0" stroke-width="1"/><rect x="590" y="464.4" width="179.3" height="19.3" fill="#4a8da0"/><rect x="590" y="492.2" width="177.5" height="19.5" fill="#4a8da0"/><rect x="590" y="520.1" width="161" height="12.4" fill="#4a8da0"/><line x1="751" y1="532.5" x2="778.3" y2="532.5" stroke="#d0d0d0" stroke-width="1"/><rect x="786.8" y="497" width="40" height="36" fill="#ebebeb"/><rect x="787.3" y="460.3" width="39.3" height="37" fill="#fff" stroke="#c9c9c9" stroke-width="1"/><rect x="786.8" y="462.2" width="38.0" height="9.9" fill="#4a8da0"/><rect x="786.8" y="476.8" width="37.4" height="10.1" fill="#4a8da0"/><rect x="786.8" y="491.8" width="34.3" height="9.6" fill="#4a8da0"/><rect x="786.8" y="506.2" width="30.5" height="9.8" fill="#4a8da0"/><rect x="786.8" y="520.7" width="24.2" height="10.1" fill="#4a8da0"/></svg>
<div class="t" style="left:385.79999999999995px;top:466.8px;width:200px;text-align:right;font-size:11px;font-weight:400;color:#737373">Paracel</div>
<div class="t" style="left:385.79999999999995px;top:495.2px;width:200px;text-align:right;font-size:11px;font-weight:400;color:#737373">PageWave</div>
<div class="t" style="left:385.79999999999995px;top:522.6px;width:200px;text-align:right;font-size:11px;font-weight:400;color:#737373">Deak-Perera ...</div>
<div class="t" style="left:565px;top:469.3px;width:200px;text-align:right;font-size:10px;font-weight:700;color:#fff">5.69M</div>
<div class="t" style="left:563px;top:497.3px;width:200px;text-align:right;font-size:10px;font-weight:700;color:#fff">5.63M</div>
<div class="t" style="left:489.70000000000005px;top:553.0px;width:200px;text-align:center;font-size:11px;font-weight:400;color:#737373">0</div>
<div class="t" style="left:552.2px;top:553.0px;width:200px;text-align:center;font-size:11px;font-weight:400;color:#737373">2M</div>
<div class="t" style="left:615.5px;top:553.0px;width:200px;text-align:center;font-size:11px;font-weight:400;color:#737373">4M</div>
<div class="t" style="left:678.3px;top:553.0px;width:200px;text-align:center;font-size:11px;font-weight:400;color:#737373">6M</div>
<div class="chart" style="left:891px;top:138px;width:260px;height:160px"></div>
<div class="ctitle" style="left:902px;top:152.5px">Total Sales and Margin</div>
<div class="t" style="left:892.5px;top:212.5px;font-size:18.5px;color:#7f7f7f">Sales</div>
<div class="t" style="left:892.5px;top:240px;font-size:24px;color:#f06d4f">104.9M</div>
<svg style="left:978px;top:249px" width="7" height="5"><path d="M0.5,0.5 L6,0.5 L3.25,3.8 Z" fill="#f06d4f"/></svg>
<div class="t" style="left:990px;top:238px;font-size:12px;color:#6dc86d">43.25M</div>
<div class="a" style="left:1033px;top:244px;width:3px;height:1px;background:#6dc86d"></div>
<div class="t" style="left:990px;top:255.5px;font-size:10px;color:#808080">Margin</div>
<div class="chart" style="left:1159px;top:138px;width:170px;height:160px"></div>
<div class="ctitle" style="left:1170px;top:152.5px">Profit Margin</div>
<div class="t" style="left:1170px;top:205.5px;font-size:10.5px;color:#7a7a7a">-50.0%</div>
<div class="t" style="left:1286.5px;top:205.5px;font-size:10.5px;color:#7a7a7a">50.0%</div>
<svg style="left:0;top:0" width="1633" height="1111"><path d="M1170.5,218 L1170.5,225.5 L1317.5,225.5 L1317.5,218" fill="none" stroke="#c8c8c8" stroke-width="1"/><rect x="1170" y="229.4" width="91.8" height="11.4" fill="#a65c88"/><rect x="1261.8" y="229.4" width="55.8" height="11.4" fill="#4a8da0"/><rect x="1303.9" y="229.4" width="1.6" height="11.4" fill="#f0ede6"/></svg>
<div class="t" style="left:1282px;top:249px;font-size:11px;color:#595959">41.3%</div>
<div class="chart" style="left:891px;top:306px;width:483px;height:272px"></div>
<div class="ctitle" style="left:902px;top:320.5px">Quarterly Trend</div>
<svg style="left:0;top:0" width="1633" height="1111"><line x1="957.5" y1="349.4" x2="1300" y2="349.4" stroke="#e3e3e3" stroke-width="1"/><line x1="957.5" y1="416" x2="1300" y2="416" stroke="#e3e3e3" stroke-width="1"/><line x1="957.5" y1="482" x2="1300" y2="482" stroke="#e3e3e3" stroke-width="1"/><line x1="957.5" y1="547.1" x2="1300" y2="547.1" stroke="#e3e3e3" stroke-width="1"/><line x1="964.5" y1="349.4" x2="964.5" y2="547.1" stroke="#d0d0d0" stroke-width="1"/><polyline points="1007.6,497 1091.6,445.1 1175,479.9 1259,499.4" fill="none" stroke="#4a8da0" stroke-width="1.1"/><circle cx="1007.6" cy="497" r="3.3" fill="#4a8da0"/><circle cx="1091.6" cy="445.1" r="3.3" fill="#4a8da0"/><circle cx="1175" cy="479.9" r="3.3" fill="#4a8da0"/><circle cx="1259" cy="499.4" r="3.3" fill="#4a8da0"/><polyline points="1007.6,410 1091.6,476.9 1175,462.8 1259,486.5" fill="none" stroke="#4fcad0" stroke-width="1.1"/><circle cx="1007.6" cy="410" r="3.3" fill="#4fcad0"/><circle cx="1091.6" cy="476.9" r="3.3" fill="#4fcad0"/><circle cx="1175" cy="462.8" r="3.3" fill="#4fcad0"/><circle cx="1259" cy="486.5" r="3.3" fill="#4fcad0"/><polyline points="1007.6,445.4 1091.6,454.4" fill="none" stroke="#a0517f" stroke-width="1.1"/><circle cx="1007.6" cy="445.4" r="3.3" fill="#a0517f"/><circle cx="1091.6" cy="454.4" r="3.3" fill="#a0517f"/><line x1="1309" y1="393.5" x2="1321" y2="393.5" stroke="#4a8da0" stroke-width="2"/><circle cx="1315" cy="393.5" r="3.3" fill="#4a8da0"/><line x1="1309" y1="414.5" x2="1321" y2="414.5" stroke="#4fcad0" stroke-width="2"/><circle cx="1315" cy="414.5" r="3.3" fill="#4fcad0"/><line x1="1309" y1="435.5" x2="1321" y2="435.5" stroke="#a0517f" stroke-width="2"/><circle cx="1315" cy="435.5" r="3.3" fill="#a0517f"/><text class="ax" transform="translate(917,448.4) rotate(-90)" text-anchor="middle" style="font-size:10.5px;fill:#737373">Sales</text></svg>
<div class="t" style="left:753.6px;top:350.8px;width:200px;text-align:right;font-size:11px;font-weight:400;color:#8c8c8c">14M</div>
<div class="t" style="left:753.6px;top:410.8px;width:200px;text-align:right;font-size:11px;font-weight:400;color:#8c8c8c">12M</div>
<div class="t" style="left:753.6px;top:476.8px;width:200px;text-align:right;font-size:11px;font-weight:400;color:#8c8c8c">10M</div>
<div class="t" style="left:753.6px;top:542.2px;width:200px;text-align:right;font-size:11px;font-weight:400;color:#8c8c8c">8M</div>
<div class="t" style="left:907.6px;top:558.4px;width:200px;text-align:center;font-size:11px;font-weight:400;color:#8c8c8c">Q1</div>
<div class="t" style="left:991.5999999999999px;top:558.4px;width:200px;text-align:center;font-size:11px;font-weight:400;color:#8c8c8c">Q2</div>
<div class="t" style="left:1075px;top:558.4px;width:200px;text-align:center;font-size:11px;font-weight:400;color:#8c8c8c">Q3</div>
<div class="t" style="left:1159px;top:558.4px;width:200px;text-align:center;font-size:11px;font-weight:400;color:#8c8c8c">Q4</div>
<div class="t" style="left:1309px;top:360.4px;font-size:13px;font-weight:400;color:#737373">Year</div>
<div class="t" style="left:1329px;top:387.9px;font-size:12px;font-weight:400;color:#737373">2012</div>
<div class="t" style="left:1329px;top:408.9px;font-size:12px;font-weight:400;color:#737373">2013</div>
<div class="t" style="left:1329px;top:429.9px;font-size:12px;font-weight:400;color:#737373">2014</div>
<div class="chart" style="left:489px;top:586px;width:885px;height:216px"></div>
<div class="ctitle" style="left:500px;top:600.5px">Sales Trend</div>
<svg style="left:0;top:0" width="1633" height="1111"><line x1="558.3" y1="629.5" x2="1308.2" y2="629.5" stroke="#e3e3e3" stroke-width="1"/><line x1="558.3" y1="684.4" x2="1308.2" y2="684.4" stroke="#e3e3e3" stroke-width="1"/><line x1="558.3" y1="738.5" x2="1308.2" y2="738.5" stroke="#e3e3e3" stroke-width="1"/><line x1="566.5" y1="629.2" x2="566.5" y2="738.8" stroke="#d0d0d0" stroke-width="1"/><line x1="1308.2" y1="629.2" x2="1308.2" y2="738.8" stroke="#d0d0d0" stroke-width="1"/><rect x="571.30" y="700.2" width="19.6" height="38.3" fill="#4a8da0"/><rect x="598.91" y="654.6" width="19.6" height="83.9" fill="#4a8da0"/><rect x="626.52" y="653.9" width="19.6" height="84.6" fill="#4a8da0"/><rect x="654.13" y="659" width="19.6" height="79.5" fill="#4a8da0"/><rect x="681.74" y="669.4" width="19.6" height="69.1" fill="#4a8da0"/><rect x="709.35" y="646.2" width="19.6" height="92.3" fill="#4a8da0"/><rect x="736.96" y="684.1" width="19.6" height="54.4" fill="#4a8da0"/><rect x="764.57" y="656.1" width="19.6" height="82.4" fill="#4a8da0"/><rect x="792.18" y="657.2" width="19.6" height="81.3" fill="#4a8da0"/><rect x="819.79" y="672.9" width="19.6" height="65.6" fill="#4a8da0"/><rect x="847.40" y="661.7" width="19.6" height="76.8" fill="#4a8da0"/><rect x="875.01" y="675.5" width="19.6" height="63.0" fill="#4a8da0"/><rect x="902.62" y="639.2" width="19.6" height="99.3" fill="#4a8da0"/><rect x="930.23" y="666.1" width="19.6" height="72.4" fill="#4a8da0"/><rect x="957.84" y="645.9" width="19.6" height="92.6" fill="#4a8da0"/><rect x="985.45" y="684.6" width="19.6" height="53.9" fill="#4a8da0"/><rect x="1013.06" y="661.7" width="19.6" height="76.8" fill="#4a8da0"/><rect x="1040.67" y="648.9" width="19.6" height="89.6" fill="#4a8da0"/><rect x="1068.28" y="680.3" width="19.6" height="58.2" fill="#4a8da0"/><rect x="1095.89" y="656" width="19.6" height="82.5" fill="#4a8da0"/><rect x="1123.50" y="650" width="19.6" height="88.5" fill="#4a8da0"/><rect x="1151.11" y="675.2" width="19.6" height="63.3" fill="#4a8da0"/><rect x="1178.72" y="659" width="19.6" height="79.5" fill="#4a8da0"/><rect x="1206.33" y="667.1" width="19.6" height="71.4" fill="#4a8da0"/><rect x="1233.94" y="648.9" width="19.6" height="89.6" fill="#4a8da0"/><rect x="1261.55" y="669.2" width="19.6" height="69.3" fill="#4a8da0"/><rect x="1289.16" y="656" width="19.6" height="82.5" fill="#4a8da0"/><polyline points="580.9,730.7 608.5,704.2 636.1,696.5 663.7,708.6 691.3,711.3 719.0,691.9 746.6,684.8 774.2,704.6 801.8,694.1 829.4,722.7 857.0,718.7 884.6,676.6 912.2,682.6 939.8,670.8 967.4,686 995.0,659.7 1022.7,670.2 1050.3,673.2 1077.9,654 1105.5,664.1 1133.1,680.3 1160.7,676.2 1188.3,687.7 1215.9,678.2 1243.5,667.5 1271.1,631.4 1298.8,654 1308.2,656.4" fill="none" stroke="#a0517f" stroke-width="1.2"/><text transform="translate(585.4,747.5) rotate(-45)" text-anchor="end" style="font-family:Liberation Sans;font-size:11px;fill:#8c8c8c">2012-<tspan style="letter-spacing:1px">...</tspan></text><text transform="translate(613.0,747.5) rotate(-45)" text-anchor="end" style="font-family:Liberation Sans;font-size:11px;fill:#8c8c8c">2012-<tspan style="letter-spacing:1px">...</tspan></text><text transform="translate(640.6,747.5) rotate(-45)" text-anchor="end" style="font-family:Liberation Sans;font-size:11px;fill:#8c8c8c">2012-<tspan style="letter-spacing:1px">...</tspan></text><text transform="translate(668.2,747.5) rotate(-45)" text-anchor="end" style="font-family:Liberation Sans;font-size:11px;fill:#8c8c8c">2012-<tspan style="letter-spacing:1px">...</tspan></text><text transform="translate(695.8,747.5) rotate(-45)" text-anchor="end" style="font-family:Liberation Sans;font-size:11px;fill:#8c8c8c">2012-<tspan style="letter-spacing:1px">...</tspan></text><text transform="translate(723.5,747.5) rotate(-45)" text-anchor="end" style="font-family:Liberation Sans;font-size:11px;fill:#8c8c8c">2012-<tspan style="letter-spacing:1px">...</tspan></text><text transform="translate(751.1,747.5) rotate(-45)" text-anchor="end" style="font-family:Liberation Sans;font-size:11px;fill:#8c8c8c">2012-<tspan style="letter-spacing:1px">...</tspan></text><text transform="translate(778.7,747.5) rotate(-45)" text-anchor="end" style="font-family:Liberation Sans;font-size:11px;fill:#8c8c8c">2012-<tspan style="letter-spacing:1px">...</tspan></text><text transform="translate(806.3,747.5) rotate(-45)" text-anchor="end" style="font-family:Liberation Sans;font-size:11px;fill:#8c8c8c">2012-<tspan style="letter-spacing:1px">...</tspan></text><text transform="translate(833.9,747.5) rotate(-45)" text-anchor="end" style="font-family:Liberation Sans;font-size:11px;fill:#8c8c8c">2012-<tspan style="letter-spacing:1px">...</tspan></text><text transform="translate(861.5,747.5) rotate(-45)" text-anchor="end" style="font-family:Liberation Sans;font-size:11px;fill:#8c8c8c">2012-<tspan style="letter-spacing:1px">...</tspan></text><text transform="translate(889.1,747.5) rotate(-45)" text-anchor="end" style="font-family:Liberation Sans;font-size:11px;fill:#8c8c8c">2012-<tspan style="letter-spacing:1px">...</tspan></text><text transform="translate(916.7,747.5) rotate(-45)" text-anchor="end" style="font-family:Liberation Sans;font-size:11px;fill:#8c8c8c">2013-<tspan style="letter-spacing:1px">...</tspan></text><text transform="translate(944.3,747.5) rotate(-45)" text-anchor="end" style="font-family:Liberation Sans;font-size:11px;fill:#8c8c8c">2013-<tspan style="letter-spacing:1px">...</tspan></text><text transform="translate(971.9,747.5) rotate(-45)" text-anchor="end" style="font-family:Liberation Sans;font-size:11px;fill:#8c8c8c">2013-<tspan style="letter-spacing:1px">...</tspan></text><text transform="translate(999.5,747.5) rotate(-45)" text-anchor="end" style="font-family:Liberation Sans;font-size:11px;fill:#8c8c8c">2013-<tspan style="letter-spacing:1px">...</tspan></text><text transform="translate(1027.2,747.5) rotate(-45)" text-anchor="end" style="font-family:Liberation Sans;font-size:11px;fill:#8c8c8c">2013-<tspan style="letter-spacing:1px">...</tspan></text><text transform="translate(1054.8,747.5) rotate(-45)" text-anchor="end" style="font-family:Liberation Sans;font-size:11px;fill:#8c8c8c">2013-<tspan style="letter-spacing:1px">...</tspan></text><text transform="translate(1082.4,747.5) rotate(-45)" text-anchor="end" style="font-family:Liberation Sans;font-size:11px;fill:#8c8c8c">2013-<tspan style="letter-spacing:1px">...</tspan></text><text transform="translate(1110.0,747.5) rotate(-45)" text-anchor="end" style="font-family:Liberation Sans;font-size:11px;fill:#8c8c8c">2013-<tspan style="letter-spacing:1px">...</tspan></text><text transform="translate(1137.6,747.5) rotate(-45)" text-anchor="end" style="font-family:Liberation Sans;font-size:11px;fill:#8c8c8c">2013-<tspan style="letter-spacing:1px">...</tspan></text><text transform="translate(1165.2,747.5) rotate(-45)" text-anchor="end" style="font-family:Liberation Sans;font-size:11px;fill:#8c8c8c">2013-<tspan style="letter-spacing:1px">...</tspan></text><text transform="translate(1192.8,747.5) rotate(-45)" text-anchor="end" style="font-family:Liberation Sans;font-size:11px;fill:#8c8c8c">2013-<tspan style="letter-spacing:1px">...</tspan></text><text transform="translate(1220.4,747.5) rotate(-45)" text-anchor="end" style="font-family:Liberation Sans;font-size:11px;fill:#8c8c8c">2013-<tspan style="letter-spacing:1px">...</tspan></text><text transform="translate(1248.0,747.5) rotate(-45)" text-anchor="end" style="font-family:Liberation Sans;font-size:11px;fill:#8c8c8c">2014-<tspan style="letter-spacing:1px">...</tspan></text><text transform="translate(1275.6,747.5) rotate(-45)" text-anchor="end" style="font-family:Liberation Sans;font-size:11px;fill:#8c8c8c">2014-<tspan style="letter-spacing:1px">...</tspan></text><text transform="translate(1303.3,747.5) rotate(-45)" text-anchor="end" style="font-family:Liberation Sans;font-size:11px;fill:#8c8c8c">2014-<tspan style="letter-spacing:1px">...</tspan></text><text transform="translate(515,684.4) rotate(-90)" text-anchor="middle" style="font-family:Liberation Sans;font-size:10.5px;fill:#737373">Sales</text><text transform="translate(1347,684.3) rotate(90)" text-anchor="middle" style="font-family:Liberation Sans;font-size:10.5px;fill:#737373">Margin (%)</text><rect x="567.2" y="787" width="741" height="7.8" fill="#ebebeb"/><rect x="567.2" y="787" width="660.8" height="7.8" fill="#c4c4c4"/></svg>
<div class="t" style="left:354.4px;top:631.1px;width:200px;text-align:right;font-size:11px;font-weight:400;color:#8c8c8c">5M</div>
<div class="t" style="left:354.4px;top:680.0px;width:200px;text-align:right;font-size:11px;font-weight:400;color:#8c8c8c">2.5M</div>
<div class="t" style="left:354.4px;top:734.1px;width:200px;text-align:right;font-size:11px;font-weight:400;color:#8c8c8c">0</div>
<div class="t" style="left:1320px;top:630.9px;font-size:11px;font-weight:400;color:#8c8c8c">46</div>
<div class="t" style="left:1320px;top:680.1px;font-size:11px;font-weight:400;color:#8c8c8c">41</div>
<div class="t" style="left:1320px;top:733.7px;font-size:11px;font-weight:400;color:#8c8c8c">36</div>
<!-- ============ TABLE PANEL ============ -->
<div class="a" style="left:301px;top:812px;width:1082px;height:299px;background:#fff"></div>
<svg style="left:841px;top:814px" width="12" height="5"><path d="M0,1 L12,1 M0,4 L12,4" stroke="#b3b3b3" stroke-width="1"/></svg>
<div class="a" style="left:309px;top:825px;width:200px;height:24px;border:1px solid #d9d9d9;border-radius:3px;background:#fff"></div>
<svg style="left:322px;top:830px" width="16" height="14"><rect x=".8" y=".8" width="14.4" height="12.4" fill="none" stroke="#404040" stroke-width="1.4"/><rect x="1" y="1" width="14" height="3" fill="#404040"/><path d="M5.5,4 L5.5,13 M10.5,4 L10.5,13" stroke="#404040" stroke-width="1.4"/></svg>
<div class="t" style="left:354px;top:831px;font-size:11.5px;color:#404040">Cities</div>
<svg style="left:486px;top:834px" width="10" height="6"><path d="M1,1 L5,5 L9,1" fill="none" stroke="#404040" stroke-width="1.4"/></svg>
<div class="a" style="left:517px;top:825px;width:1px;height:24px;background:#d9d9d9"></div>
<div class="a" style="left:526px;top:825px;width:112px;height:24px;border:1px solid #e6e6e6;border-radius:3px;background:#fff"></div>
<svg style="left:530px;top:830px" width="16" height="14"><rect x=".5" y=".5" width="13" height="13" fill="none" stroke="#d0d0d0" stroke-width="1" stroke-dasharray="3,2"/><circle cx="10" cy="8" r="3.2" fill="#d9d9d9"/><path d="M8.7,6.7 L11.3,9.3 M11.3,6.7 L8.7,9.3" stroke="#fff" stroke-width="0.9"/></svg>
<div class="t" style="left:553px;top:831px;font-size:11.5px;color:#c7c7c7">Clear selections</div>
<div class="a" style="left:1351px;top:825px;width:24px;height:24px;border:1px solid #d0d0d0;border-radius:3px;background:#f2f2f2"></div>
<svg style="left:1356px;top:830px" width="14" height="14"><path d="M8,1 L13,6 L11.5,6.5 L9,9 L9,11.5 L7.5,12 L2,6.5 L2.5,5 L5,5 L7.5,2.5 Z" fill="#404040"/><path d="M4.8,9.2 L1,13" stroke="#404040" stroke-width="1.4"/></svg>
<svg style="left:0;top:0" width="1633" height="1111"><line x1="301" y1="860.5" x2="1368" y2="860.5" stroke="#d9d9d9" stroke-width="1"/><line x1="301" y1="893.5" x2="1368" y2="893.5" stroke="#6b6b6b" stroke-width="1"/><line x1="301" y1="934.5" x2="1368" y2="934.5" stroke="#d9d9d9" stroke-width="1"/><line x1="301" y1="975.5" x2="1368" y2="975.5" stroke="#d9d9d9" stroke-width="1"/><line x1="301" y1="1016.5" x2="1368" y2="1016.5" stroke="#d9d9d9" stroke-width="1"/><line x1="301" y1="1057.5" x2="1368" y2="1057.5" stroke="#d9d9d9" stroke-width="1"/><line x1="452.5" y1="861" x2="452.5" y2="1095" stroke="#d9d9d9" stroke-width="1"/><line x1="605.5" y1="861" x2="605.5" y2="1095" stroke="#d9d9d9" stroke-width="1"/><line x1="757.5" y1="861" x2="757.5" y2="1095" stroke="#d9d9d9" stroke-width="1"/><line x1="910.5" y1="861" x2="910.5" y2="1095" stroke="#d9d9d9" stroke-width="1"/><line x1="1062.5" y1="861" x2="1062.5" y2="1095" stroke="#d9d9d9" stroke-width="1"/><line x1="1215.5" y1="861" x2="1215.5" y2="1095" stroke="#d9d9d9" stroke-width="1"/><path d="M1371,872.6 L1375.5,866 L1380,872.6 Z" fill="#8c8c8c"/><rect x="1371.5" y="879.4" width="8.5" height="20.2" rx="4.2" fill="#8c8c8c"/><path d="M1371,1098 L1375.5,1104.6 L1380,1098 Z" fill="#8c8c8c"/></svg>
<svg style="left:311.5px;top:872px" width="11" height="10"><path d="M0,1 L11,1 M0,5 L11,5 M0,9 L11,9" stroke="#404040" stroke-width="1.5"/></svg>
<svg style="left:371px;top:871px" width="12" height="11"><path d="M2.5,11 L2.5,1 M0.5,3 L2.5,0.8 L4.5,3" fill="none" stroke="#404040" stroke-width="1"/><path d="M6,3 L11,3 M6,6 L11,6 M6,9 L11,9" stroke="#404040" stroke-width="1"/></svg>
<div class="th" style="left:240px;top:872px;width:200px;text-align:right">City Code</div>
<div class="th" style="left:465.5px;top:872px">City</div>
<svg style="left:583px;top:872px" width="11" height="10"><path d="M0,1 L11,1 M0,5 L11,5 M0,9 L11,9" stroke="#404040" stroke-width="1.5"/></svg>
<div class="th" style="left:618px;top:872px">Region</div>
<svg style="left:735.5px;top:872px" width="11" height="10"><path d="M0,1 L11,1 M0,5 L11,5 M0,9 L11,9" stroke="#404040" stroke-width="1.5"/></svg>
<svg style="left:768px;top:872px" width="11" height="10"><path d="M0,1 L11,1 M0,5 L11,5 M0,9 L11,9" stroke="#404040" stroke-width="1.5"/></svg>
<div class="th" style="left:697px;top:872px;width:200px;text-align:right">Latitude</div>
<svg style="left:921px;top:872px" width="11" height="10"><path d="M0,1 L11,1 M0,5 L11,5 M0,9 L11,9" stroke="#404040" stroke-width="1.5"/></svg>
<div class="th" style="left:850px;top:872px;width:200px;text-align:right">Longitude</div>
<div class="th" style="left:1074.5px;top:872px">Desc</div>
<svg style="left:1193.5px;top:872px" width="11" height="10"><path d="M0,1 L11,1 M0,5 L11,5 M0,9 L11,9" stroke="#404040" stroke-width="1.5"/></svg>
<div class="th" style="left:1227.8px;top:872px">Location</div>
<svg style="left:1346.5px;top:872px" width="11" height="10"><path d="M0,1 L11,1 M0,5 L11,5 M0,9 L11,9" stroke="#404040" stroke-width="1.5"/></svg>
<div class="td" style="left:240px;top:897.8px;width:200px;text-align:right">1</div>
<div class="td" style="left:465.5px;top:897.8px">New York</div>
<div class="td" style="left:618px;top:897.8px">USA</div>
<div class="td" style="left:697px;top:897.8px;width:200px;text-align:right">40.730599</div>
<div class="td" style="left:850px;top:897.8px;width:200px;text-align:right">-73.986581</div>
<div class="td" style="left:1074.5px;top:897.8px">New York City, NY, US</div>
<div class="td" style="left:1227.8px;top:897.8px">[-73.986581000000001,40<br>.730598999999998]</div>
<div class="td" style="left:240px;top:938.8px;width:200px;text-align:right">2</div>
<div class="td" style="left:465.5px;top:938.8px">Los Angeles</div>
<div class="td" style="left:618px;top:938.8px">USA</div>
<div class="td" style="left:697px;top:938.8px;width:200px;text-align:right">34.053678</div>
<div class="td" style="left:850px;top:938.8px;width:200px;text-align:right">-118.242702</div>
<div class="td" style="left:1074.5px;top:938.8px">Los Angeles, Los Angeles<br>County, CA, US</div>
<div class="td" style="left:1227.8px;top:938.8px">[-118.24270199999999,34<br>.053677999999998]</div>
<div class="td" style="left:240px;top:979.8px;width:200px;text-align:right">3</div>
<div class="td" style="left:465.5px;top:979.8px">Chicago</div>
<div class="td" style="left:618px;top:979.8px">USA</div>
<div class="td" style="left:697px;top:979.8px;width:200px;text-align:right">41.875555</div>
<div class="td" style="left:850px;top:979.8px;width:200px;text-align:right">-87.624421</div>
<div class="td" style="left:1074.5px;top:979.8px">Chicago, Cook County, IL,<br>US</div>
<div class="td" style="left:1227.8px;top:979.8px">[-87.624420999999998,41<br>.875554999999999]</div>
<div class="td" style="left:240px;top:1020.8px;width:200px;text-align:right">4</div>
<div class="td" style="left:465.5px;top:1020.8px">Houston</div>
<div class="td" style="left:618px;top:1020.8px">USA</div>
<div class="td" style="left:697px;top:1020.8px;width:200px;text-align:right">29.981501</div>
<div class="td" style="left:850px;top:1020.8px;width:200px;text-align:right">-95.53836</div>
<div class="td" style="left:1074.5px;top:1020.8px">Houston, Harris County,<br>TX, US</div>
<div class="td" style="left:1227.8px;top:1020.8px">[-95.538359999999997,29<br>.981501000000002]</div>
<div class="td" style="left:240px;top:1061.8px;width:200px;text-align:right">5</div>
<div class="td" style="left:465.5px;top:1061.8px">Philadelphia</div>
<div class="td" style="left:618px;top:1061.8px">USA</div>
<div class="td" style="left:697px;top:1061.8px;width:200px;text-align:right">39.952335</div>
<div class="td" style="left:850px;top:1061.8px;width:200px;text-align:right">-75.163789</div>
<div class="td" style="left:1074.5px;top:1061.8px">Philadelphia,<br>Philadelphia County, PA,</div>
<div class="td" style="left:1227.8px;top:1061.8px">[-75.163788999999994,39<br>.952334999999998]</div>
<!-- ============ RIGHT PANEL ============ -->
<div class="a" style="left:1383px;top:89px;width:250px;height:1022px;background:#fff;border-left:1px solid #d9d9d9"></div>
<div class="a" style="left:1384px;top:89px;width:249px;height:96px;background:#f9f9f9"></div>
<div class="a" style="left:1384px;top:1036px;width:249px;height:75px;background:#f9f9f9"></div>
<svg style="left:1399px;top:111px" width="17" height="13"><path d="M1.7,11.5 Q.6,11.5 .6,10.3 L.6,1.8 Q.6,.6 1.7,.6 L13,.6 Q14.2,.6 14.2,1.8 L14.2,8" fill="none" stroke="#404040" stroke-width="1.1"/><path d="M4.5,8 L14,8 Q15.6,8 15.6,9.8 Q15.6,11.8 14,11.8 L2,11.8 Q3.5,11.8 3.5,9.8 Q3.5,8 4.5,8 Z" fill="none" stroke="#404040" stroke-width="1.1"/></svg>
<div class="a" style="left:1384px;top:147px;width:249px;height:1px;background:#e3e3e3"></div>
<div class="a" style="left:1384px;top:148px;width:2px;height:37px;background:#009845"></div>
<div class="a" style="left:1384px;top:185px;width:249px;height:1px;background:#e3e3e3"></div>
<div class="t" style="left:1394px;top:159px;font-size:13px;color:#404040">Sheet properties</div>
<div class="t" style="left:1394.5px;top:197.7px;font-size:12.5px;color:#404040">Title</div>
<div class="inp" style="left:1394px;top:217px;width:228.5px;height:27.5px"></div>
<div class="t" style="left:1401.5px;top:226px;font-size:11.5px;color:#404040">Dashboard</div>
<div class="t" style="left:1394.5px;top:265.0px;font-size:12.5px;color:#404040">Title expression</div>
<div class="inp" style="left:1394px;top:284px;width:229px;height:27.5px"></div>
<div class="a" style="left:1579px;top:285px;width:1px;height:25.5px;background:#b3b3b3"></div>
<svg style="left:1594px;top:290.5px" width="16" height="16"><path d="M8.8,1.5 Q7,0.3 5.9,2.6 L3.4,13 Q2.6,15.3 0.9,14.6 M3,5.6 L7.6,5.6" fill="none" stroke="#404040" stroke-width="1.15" stroke-linecap="round"/><path d="M8.2,6.2 L14.4,12.4 M14.4,6.2 L8.2,12.4" fill="none" stroke="#404040" stroke-width="1.1"/></svg>
<div class="t" style="left:1394.5px;top:331.9px;font-size:12.5px;color:#404040">Show condition</div>
<div class="inp" style="left:1394px;top:351px;width:229px;height:27.5px"></div>
<div class="a" style="left:1579px;top:352px;width:1px;height:25.5px;background:#b3b3b3"></div>
<svg style="left:1594px;top:357.5px" width="16" height="16"><path d="M8.8,1.5 Q7,0.3 5.9,2.6 L3.4,13 Q2.6,15.3 0.9,14.6 M3,5.6 L7.6,5.6" fill="none" stroke="#f5a02a" stroke-width="1.15" stroke-linecap="round"/><path d="M8.2,6.2 L14.4,12.4 M14.4,6.2 L8.2,12.4" fill="none" stroke="#f5a02a" stroke-width="1.1"/></svg>
<div class="t" style="left:1394.5px;top:399.2px;font-size:12.5px;color:#404040">Description</div>
<div class="inp" style="left:1394px;top:418.7px;width:228.5px;height:62px"></div>
<svg style="left:1593px;top:453px" width="16" height="16"><path d="M8.8,1.5 Q7,0.3 5.9,2.6 L3.4,13 Q2.6,15.3 0.9,14.6 M3,5.6 L7.6,5.6" fill="none" stroke="#737373" stroke-width="1.15" stroke-linecap="round"/><path d="M8.2,6.2 L14.4,12.4 M14.4,6.2 L8.2,12.4" fill="none" stroke="#737373" stroke-width="1.1"/></svg>
<svg style="left:1613px;top:471px" width="8" height="8"><path d="M1,7 L7,1 M4,7 L7,4" stroke="#8c8c8c" stroke-width="0.9"/></svg>
<div class="t" style="left:1394.5px;top:501.1px;font-size:12.5px;color:#404040">Thumbnail</div>
<div class="a" style="left:1394.5px;top:518.7px;width:228.5px;height:135px;border:3px solid #b5b5b5;border-radius:5px;background:#fff"></div>
<div class="tile" style="left:1398.7px;top:522.5px;width:24.5px;height:29.4px"></div>
<div class="tile" style="left:1435.6px;top:522.5px;width:71.2px;height:51.3px"></div>
<div class="tile" style="left:1519.2px;top:522.5px;width:52.4px;height:29.4px"></div>
<div class="tile" style="left:1575.1px;top:522.5px;width:34.0px;height:29.4px"></div>
<div class="tile" style="left:1519.2px;top:555.6px;width:99.1px;height:50.4px"></div>
<div class="tile" style="left:1435.6px;top:576.7px;width:71.2px;height:29.3px"></div>
<div class="tile" style="left:1398.7px;top:587.3px;width:24.5px;height:62.0px"></div>
<div class="tile" style="left:1435.6px;top:608.9px;width:182.7px;height:40.4px"></div>
<svg style="left:1402px;top:529px;color:#8c8c8c" width="17" height="17"><use href="#i-filter"/></svg>
<svg style="left:1402px;top:610px;color:#8c8c8c" width="17" height="17"><use href="#i-filter"/></svg>
<svg style="left:1462px;top:539px;color:#8c8c8c" width="17" height="17"><use href="#i-pie"/></svg>
<div class="t" style="left:1535px;top:529px;font-size:17px;font-weight:700;color:#8c8c8c">#1</div>
<svg style="left:1583px;top:529px;color:#8c8c8c" width="18" height="17"><use href="#i-gauge"/></svg>
<svg style="left:1559px;top:571px;color:#8c8c8c" width="19" height="18"><use href="#i-line"/></svg>
<svg style="left:1462px;top:582px;color:#8c8c8c" width="18" height="18"><use href="#i-bar"/></svg>
<svg style="left:1517px;top:622px;color:#8c8c8c" width="17" height="17"><use href="#i-combo"/></svg>
<div class="a" style="left:1488.5px;top:566.5px;width:34px;height:34px;border-radius:50%;background:#e6e6e6"></div>
<div class="a" style="left:1490.5px;top:568.5px;width:30px;height:30px;border-radius:50%;background:#737373"></div>
<svg style="left:1497px;top:576px" width="17" height="14"><rect x=".7" y=".7" width="15.6" height="12.6" fill="none" stroke="#fff" stroke-width="1.2"/><path d="M1,12.5 L6,6.5 L10,10.5 L12,8.5 L16,12.5" fill="none" stroke="#fff" stroke-width="1.1"/><circle cx="12" cy="4.5" r="1.4" fill="#fff"/></svg>
<div class="a" style="left:1384px;top:662px;width:249px;height:1px;background:#e3e3e3"></div>
<svg style="left:1403px;top:683px" width="18" height="17"><path d="M9,1 Q16.5,1 16.8,7.8 Q17,12 13.5,11.5 Q11,11 11,13 Q11.5,16 9,16 Q1,16 1,8.5 Q1,1 9,1 Z" fill="#404040"/><circle cx="5" cy="8.5" r="1.5" fill="#f9f9f9"/><circle cx="6.5" cy="4.8" r="1.5" fill="#f9f9f9"/><circle cx="10.5" cy="4.2" r="1.5" fill="#f9f9f9"/><circle cx="13.5" cy="7" r="1.5" fill="#f9f9f9"/></svg>
<div class="t" style="left:1433px;top:686px;font-size:13px;font-weight:700;color:#4a4a4a">Styling</div>
<svg style="left:1613px;top:684px" width="7" height="11"><path d="M1,1 L5.5,5.5 L1,10" fill="none" stroke="#404040" stroke-width="1.5"/></svg>
<div class="a" style="left:1384px;top:716px;width:249px;height:1px;background:#e3e3e3"></div>
<div class="t" style="left:1394.5px;top:728.5px;font-size:12.5px;color:#404040">Grid spacing</div>
<div class="inp" style="left:1394px;top:748px;width:228.5px;height:27px;border-color:#bfbfbf"></div>
<div class="t" style="left:1405px;top:756.5px;font-size:11.5px;font-weight:700;color:#4a4a4a">Wide</div>
<svg style="left:1602px;top:758px" width="10" height="7"><path d="M0,0 L10,0 L5,7 Z" fill="#404040"/></svg>
<div class="a" style="left:1384px;top:784.4px;width:249px;height:1px;background:#e3e3e3"></div>
<div class="t" style="left:1394.5px;top:797.0px;font-size:12.5px;color:#404040">Sheet size</div>
<div class="inp" style="left:1394px;top:816px;width:228.5px;height:27px;border-color:#bfbfbf"></div>
<div class="t" style="left:1405px;top:824.5px;font-size:11.5px;font-weight:700;color:#4a4a4a">Responsive</div>
<svg style="left:1602px;top:826px" width="10" height="7"><path d="M0,0 L10,0 L5,7 Z" fill="#404040"/></svg>
<div class="t" style="left:1394.5px;top:863.9px;font-size:12.5px;color:#404040">Small screen layout</div>
<div class="inp" style="left:1394px;top:883px;width:228.5px;height:27px;border-color:#bfbfbf"></div>
<div class="t" style="left:1405px;top:891.5px;font-size:11.5px;font-weight:700;color:#4a4a4a">List view</div>
<svg style="left:1602px;top:893px" width="10" height="7"><path d="M0,0 L10,0 L5,7 Z" fill="#404040"/></svg>
<div class="t" style="left:1394.5px;top:933.9px;font-size:12.5px;color:#404040">Extend sheet</div>
<div class="t" style="left:1394.5px;top:956px;font-size:12px;font-weight:700;color:#404040">Off</div>
<div class="a" style="left:1582px;top:941px;width:40.5px;height:13px;border-radius:7px;background:#fff;border:1px solid #c9c9c9"></div>
<div class="a" style="left:1580px;top:936.5px;width:23px;height:23px;border-radius:50%;background:#f2f2f2;border:1px solid #c9c9c9;box-shadow:0 1px 1px rgba(0,0,0,.1)"></div>
<div class="a" style="left:1384px;top:979.3px;width:249px;height:1px;background:#e3e3e3"></div>
<div class="a" style="left:1384px;top:1036px;width:249px;height:1px;background:#e3e3e3"></div>
<div class="t" style="left:1394.5px;top:1049.5px;font-size:12.5px;color:#404040">Alternate states</div>
<div class="a" style="left:1384px;top:1074.4px;width:249px;height:1px;background:#e3e3e3"></div>
<div class="t" style="left:1394.5px;top:1087.5px;font-size:12.5px;color:#404040">Actions</div>
<div class="a" style="left:0;top:1102px;width:9px;height:9px;background:radial-gradient(circle at 9px 0,rgba(0,0,0,0) 8.5px,#5a5a5a 9.5px)"></div>
<div class="a" style="left:1624px;top:1102px;width:9px;height:9px;background:radial-gradient(circle at 0 0,rgba(0,0,0,0) 8.5px,#5a5a5a 9.5px)"></div>
</body></html>
